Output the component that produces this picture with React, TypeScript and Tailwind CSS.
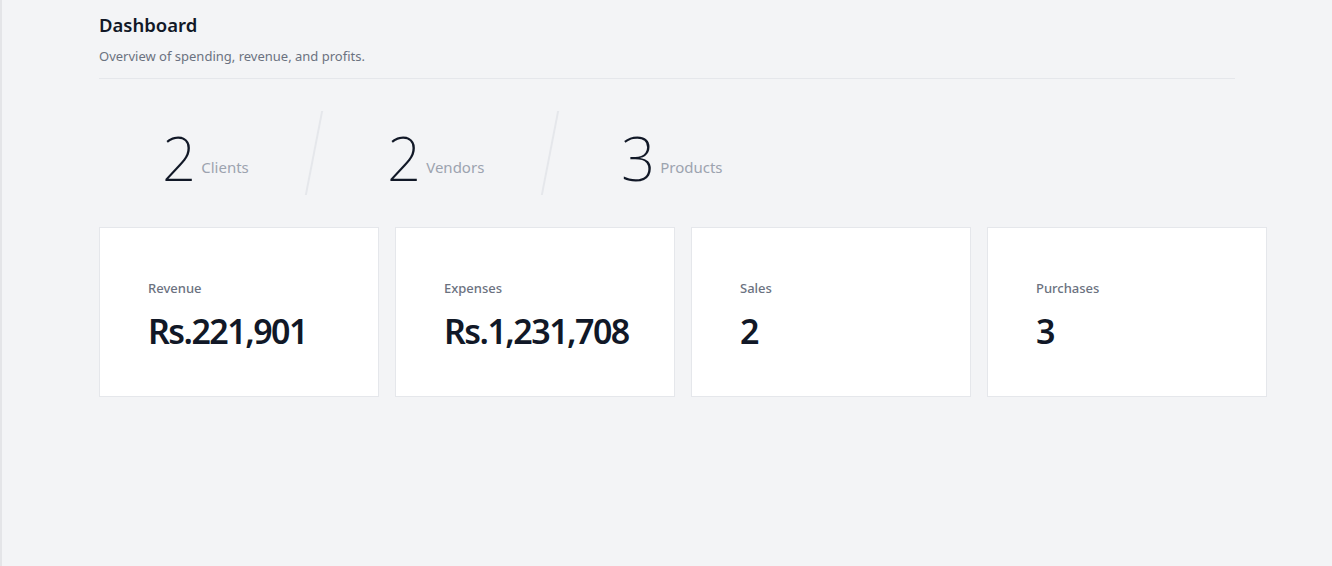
import React from "react";

const stats = [
  { n: "2", label: "Clients", w: "w-[214px]", pl: "pl-[63px]" },
  { n: "2", label: "Vendors", w: "w-[234px]", pl: "pl-[72px]" },
  { n: "3", label: "Products", w: "w-[234px]", pl: "pl-[70px]" },
];

const cards = [
  { label: "Revenue", value: "Rs.221,901" },
  { label: "Expenses", value: "Rs.1,231,708" },
  { label: "Sales", value: "2" },
  { label: "Purchases", value: "3" },
];

export default function App() {
  return (
    <div
      className="min-h-screen w-full bg-[#f3f4f6] border-l-2 border-[#e4e5e8]"
      style={{ fontFamily: "'Noto Sans', 'Open Sans', sans-serif" }}
    >
      <div className="pl-[97px] pr-[65px] pt-[11px]">
        <div className="mr-8 border-b border-[#e5e7eb] pb-[12px]">
          <h1 className="text-[18.5px] leading-7 font-semibold text-[#111827]">Dashboard</h1>
          <p className="mt-[7px] text-[13px] leading-5 text-[#6b7280]">
            Overview of spending, revenue, and profits.
          </p>
        </div>

        <div className="mt-8 flex h-[84px] items-center">
          {stats.map((s, i) => (
            <React.Fragment key={s.label}>
              {i > 0 && (
                <div className="h-[84px] w-[2px] shrink-0 -skew-x-[11deg] bg-[#e5e7eb]" />
              )}
              <div className={`${s.w} ${s.pl} flex items-end shrink-0 pt-[10px]`}>
                <span className="text-[60px] leading-none font-extralight text-[#111827]">
                  {s.n}
                </span>
                <span className="ml-[5px] mb-[10px] text-[15px] text-[#9ca3af]">{s.label}</span>
              </div>
            </React.Fragment>
          ))}
        </div>

        <div className="mt-8 grid grid-cols-4 gap-4">
          {cards.map((c) => (
            <div
              key={c.label}
              className="h-[170px] border border-[#e5e7eb] bg-white pl-12 pt-[50px]"
            >
              <div className="text-[13px] leading-5 font-medium text-[#6b7280]">{c.label}</div>
              <div className="mt-[11px] text-[34px] leading-[44px] font-semibold tracking-[-0.045em] text-[#111827]">
                {c.value}
              </div>
            </div>
          ))}
        </div>
      </div>
    </div>
  );
}
